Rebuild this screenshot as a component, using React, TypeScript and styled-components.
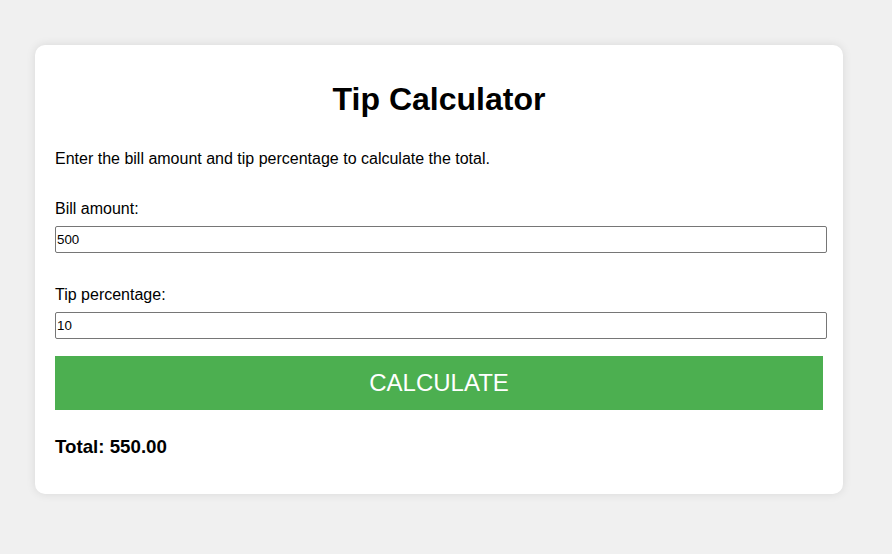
import React, { useState } from "react";
import styled, { createGlobalStyle } from "styled-components";

const GlobalStyle = createGlobalStyle`
  html, body {
    margin: 0;
    padding: 0;
    background: #f0f0f0;
    font-family: "Liberation Sans", Arial, sans-serif;
  }
`;

const Page = styled.div`
  padding: 45px 49px 40px 35px;
  min-height: 554px;
  box-sizing: border-box;
`;

const Card = styled.div`
  width: 808px;
  box-sizing: border-box;
  background: #ffffff;
  border-radius: 10px;
  box-shadow: 0 0 10px rgba(0, 0, 0, 0.1);
  padding: 20px;
  color: #000;
`;

const Title = styled.h1`
  font-size: 32px;
  font-weight: bold;
  text-align: center;
  margin: 16px 0 32px;
`;

const Intro = styled.p`
  font-size: 16px;
  margin: 0 0 32px;
`;

const Field = styled.div<{ $after: number }>`
  margin-bottom: ${(p) => p.$after}px;
`;

const Label = styled.label`
  display: block;
  font-size: 16px;
  margin-bottom: 8px;
`;

const Input = styled.input`
  display: block;
  box-sizing: border-box;
  width: calc(100% + 4px);
  height: 27.4px;
  padding: 1px 1px;
  border: 1px solid #767676;
  border-radius: 2px;
  font-family: "Liberation Sans", Arial, sans-serif;
  font-size: 13.333px;
  color: #000;
  background: #fff;
  outline: none;
`;

const Button = styled.button`
  display: block;
  width: 100%;
  height: 54px;
  border: none;
  border-radius: 0;
  background: #4caf50;
  color: #ffffff;
  font-family: "Liberation Sans", Arial, sans-serif;
  font-size: 24px;
  text-transform: uppercase;
  cursor: pointer;
`;

const Total = styled.h3`
  font-size: 18.72px;
  font-weight: bold;
  margin: 26px 0 16px;
`;

export default function App() {
  const [bill, setBill] = useState("500");
  const [tip, setTip] = useState("10");
  const [total, setTotal] = useState("550.00");

  const calculate = () => {
    const b = parseFloat(bill) || 0;
    const t = parseFloat(tip) || 0;
    setTotal((b + (b * t) / 100).toFixed(2));
  };

  return (
    <>
      <GlobalStyle />
      <Page>
        <Card>
          <Title>Tip Calculator</Title>
          <Intro>Enter the bill amount and tip percentage to calculate the total.</Intro>
          <Field $after={32.6}>
            <Label htmlFor="bill">Bill amount:</Label>
            <Input id="bill" type="text" value={bill} onChange={(e) => setBill(e.target.value)} />
          </Field>
          <Field $after={16.6}>
            <Label htmlFor="tip">Tip percentage:</Label>
            <Input id="tip" type="text" value={tip} onChange={(e) => setTip(e.target.value)} />
          </Field>
          <Button onClick={calculate}>Calculate</Button>
          <Total>Total: {total}</Total>
        </Card>
      </Page>
    </>
  );
}
